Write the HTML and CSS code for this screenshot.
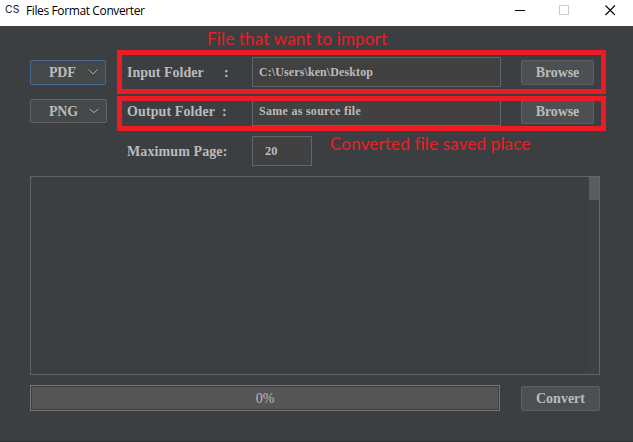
FILE: index.html
```html
<!DOCTYPE html>
<html lang="en">
<head>
<meta charset="utf-8">
<title>Files Format Converter</title>
<link rel="stylesheet" href="styles.css">
</head>
<body>
<div class="window">
  <header class="titlebar">
    <span class="logo">CS</span>
    <h1 class="title">Files Format Converter</h1>
    <svg class="controls" width="102" height="20" viewBox="0 0 102 20" fill="none">
      <path d="M0 10.5h10" stroke="#000"/>
      <rect x="44.5" y="5.500" width="9" height="9" stroke="#ccc"/>
      <path d="M90.500 5.500l9.500 9.500M100 5.500l-9.500 9.500" stroke="#000" stroke-width="1.100"/>
    </svg>
  </header>
  <main class="content">
    <div class="row">
      <div class="cell"><button class="combo focused"><span>PDF</span><svg class="chevron" width="10" height="6" viewBox="0 0 10 6"><path d="M.5.5L5 5 9.500.5"/></svg></button></div>
      <div class="label"><span class="name">Input Folder</span><span>:</span></div>
      <div class="field"><span class="path">C:\Users\ken\Desktop</span></div>
      <button class="button browse">Browse</button>
    </div>
    <div class="row output">
      <div class="cell"><button class="combo"><span>PNG</span><svg class="chevron" width="10" height="6" viewBox="0 0 10 6"><path d="M.5 1L5 4.500 9.500 1"/></svg></button></div>
      <div class="label"><span class="name short">Output Folder</span><span>:</span></div>
      <div class="field"><span class="source">Same as source file</span></div>
      <button class="button browse">Browse</button>
    </div>
    <div class="row pages">
      <div class="cell"></div>
      <div class="label wide">Maximum Page:</div>
      <div class="field count">20</div>
    </div>
    <div class="list"><div class="track"><div class="thumb"></div></div></div>
    <div class="footer">
      <div class="progress"><div class="bar">0%</div></div>
      <button class="button convert">Convert</button>
    </div>
  </main>
  <div class="mark mark-input"></div>
  <div class="mark mark-output"></div>
  <div class="note note-input">File that want to import</div>
  <div class="note note-output">Converted file saved place</div>
</div>
</body>
</html>
```
FILE: styles.css
```css
* { box-sizing: border-box; }
body { margin: 0; }
.window {
  position: relative;
  width: 633px;
  height: 442px;
  overflow: hidden;
  background: #3c3f41;
  border-bottom: 1px solid #303234;
  color: #bbb;
  font: bold 14px/18px "Liberation Serif", serif;
}
.titlebar {
  display: flex;
  height: 26px;
  padding-left: 5px;
  background: #fff;
  color: #000;
}
.logo {
  width: 21px;
  font: 10.5px/20px Inter, sans-serif;
  color: #223;
}
.title {
  margin: 0;
  font: 12px/22px "Open Sans", sans-serif;
  letter-spacing: -0.38px;
}
.controls { margin-left: auto; margin-right: 16px; }
.content { padding: 31px 33px 0 30px; }
.row {
  display: grid;
  grid-template-columns: 97px 125px 249px 73px;
  align-items: center;
  height: 30px;
}
.row .browse { margin-left: 20px; }
.output { margin-top: 9px; }
.pages { margin-top: 10px; }
.combo {
  display: flex;
  align-items: center;
  width: 77px;
  height: 24px;
  padding: 2px 7px 0 18px;
  border: 1px solid #646464;
  border-radius: 2px;
  background: #454848;
  color: inherit;
  font: inherit;
  letter-spacing: -0.2px;
}
.focused {
  width: 76px;
  height: 25px;
  border-color: #466d94;
}
.chevron {
  margin-left: auto;
  margin-bottom: 2px;
  fill: none;
  stroke: #aaa;
}
.label {
  display: flex;
  padding-top: 2px;
  white-space: pre;
}
.name { width: 97px; }
.short { width: 95px; letter-spacing: 0.1px; }
.wide { letter-spacing: 0.1px; }
.field {
  height: 30px;
  padding-left: 6px;
  border: 1px solid #646464;
  background: #414141;
  font-size: 12px;
  line-height: 28px;
}
.path { letter-spacing: 0.1px; }
.source { letter-spacing: 0.28px; }
.count { width: 60px; padding-left: 12px; font-size: 12.5px; }
.button {
  height: 25px;
  padding: 1px 0 0;
  border: 1px solid #5e6060;
  border-radius: 2px;
  background: #4c5052;
  color: inherit;
  font: inherit;
}
.browse { width: 73px; padding-top: 2px; letter-spacing: -0.1px; }
.list {
  height: 199px;
  margin-top: 10px;
  border: 1px solid #646464;
}
.track {
  width: 10px;
  height: 100%;
  margin-left: auto;
  background: #3e4143;
}
.thumb { height: 23px; background: #595d60; }
.footer {
  display: flex;
  justify-content: space-between;
  align-items: flex-end;
  margin-top: 10px;
}
.progress {
  width: 470px;
  height: 26px;
  padding: 1px;
  border: 1px solid #777;
}
.bar {
  height: 100%;
  background: #555;
  font-weight: normal;
  line-height: 24px;
  text-align: center;
}
.convert { width: 79px; }
.mark {
  position: absolute;
  left: 117px;
  width: 489px;
  border: 5px solid #ed1c24;
}
.mark-input { top: 50px; height: 44px; }
.mark-output { top: 96px; height: 35px; }
.note {
  position: absolute;
  color: #ed1c24;
  font: 17px/22px Lato, sans-serif;
  letter-spacing: 0.17px;
  white-space: nowrap;
}
.note-input { left: 207px; top: 28px; }
.note-output { left: 330px; top: 133px; }
```
